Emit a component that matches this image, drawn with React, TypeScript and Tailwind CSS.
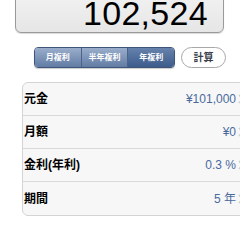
import React from "react";

const rows = [
  { label: "元金", value: "¥101,000" },
  { label: "月額", value: "¥0" },
  { label: "金利(年利)", value: "0.3 %" },
  { label: "期間", value: "5 年" },
];

function Chevron() {
  return (
    <svg width="6" height="10" viewBox="0 0 6 10" className="shrink-0">
      <path d="M1 1 L5 5 L1 9" fill="none" stroke="#d0d0d0" strokeWidth="1.6" />
    </svg>
  );
}

export default function App() {
  const jp = { fontFamily: '"Liberation Sans", "Noto Sans CJK JP", sans-serif' };
  return (
    <div className="w-[240px] h-[240px] overflow-hidden bg-white" style={jp}>
      <div className="ml-[15px] -mt-[8px] w-[209px] h-[41px] rounded-[6px] border border-[#9a9a9a] bg-gradient-to-b from-[#f2f2f2] to-[#e6e6e6] shadow-[0_1px_1px_rgba(0,0,0,0.15)] flex items-end justify-end pr-[15px] pb-[4px]">
        <span className="text-[34px] leading-[30px] text-black tracking-[0.3px]">102,524</span>
      </div>
      <div className="flex items-center mt-[14px] ml-[34px] gap-[6px]">
        <div className="flex h-[21px] w-[141px] rounded-[4px] overflow-hidden border border-[#3e5478] shadow-[0_1px_1px_rgba(0,0,0,0.2)]">
          <div className="flex-1 flex items-center justify-center bg-gradient-to-b from-[#9aaecb] to-[#627ca4] text-white text-[8px] font-bold border-r border-[#4c6288]">月複利</div>
          <div className="flex-1 flex items-center justify-center bg-gradient-to-b from-[#9aaecb] to-[#627ca4] text-white text-[8px] font-bold border-r border-[#4c6288]">半年複利</div>
          <div className="flex-1 flex items-center justify-center bg-gradient-to-b from-[#6682ac] to-[#3d5c8c] text-white text-[8px] font-bold">年複利</div>
        </div>
        <div className="flex h-[21px] w-[45px] items-center justify-center rounded-full border border-[#a8a8a8] bg-white text-[10px] font-bold text-[#3a3f4a]">計算</div>
      </div>
      <div className="ml-[22px] mt-[14px] w-[226px] rounded-[6px] border border-[#d4d4d4] bg-[#f7f7f7] shadow-[0_1px_0_rgba(255,255,255,0.8)]">
        {rows.map((r, i) => (
          <div
            key={r.label}
            className={`flex h-[33px] items-center pl-[1px] pr-[3px] ${i < rows.length - 1 ? "border-b border-[#d9d9d9]" : ""}`}
          >
            <span className="text-[12px] font-bold text-black">{r.label}</span>
            <span className="ml-auto text-[12px] text-[#4a6a9e] mr-[2px]">{r.value}</span>
            <Chevron />
          </div>
        ))}
      </div>
    </div>
  );
}
